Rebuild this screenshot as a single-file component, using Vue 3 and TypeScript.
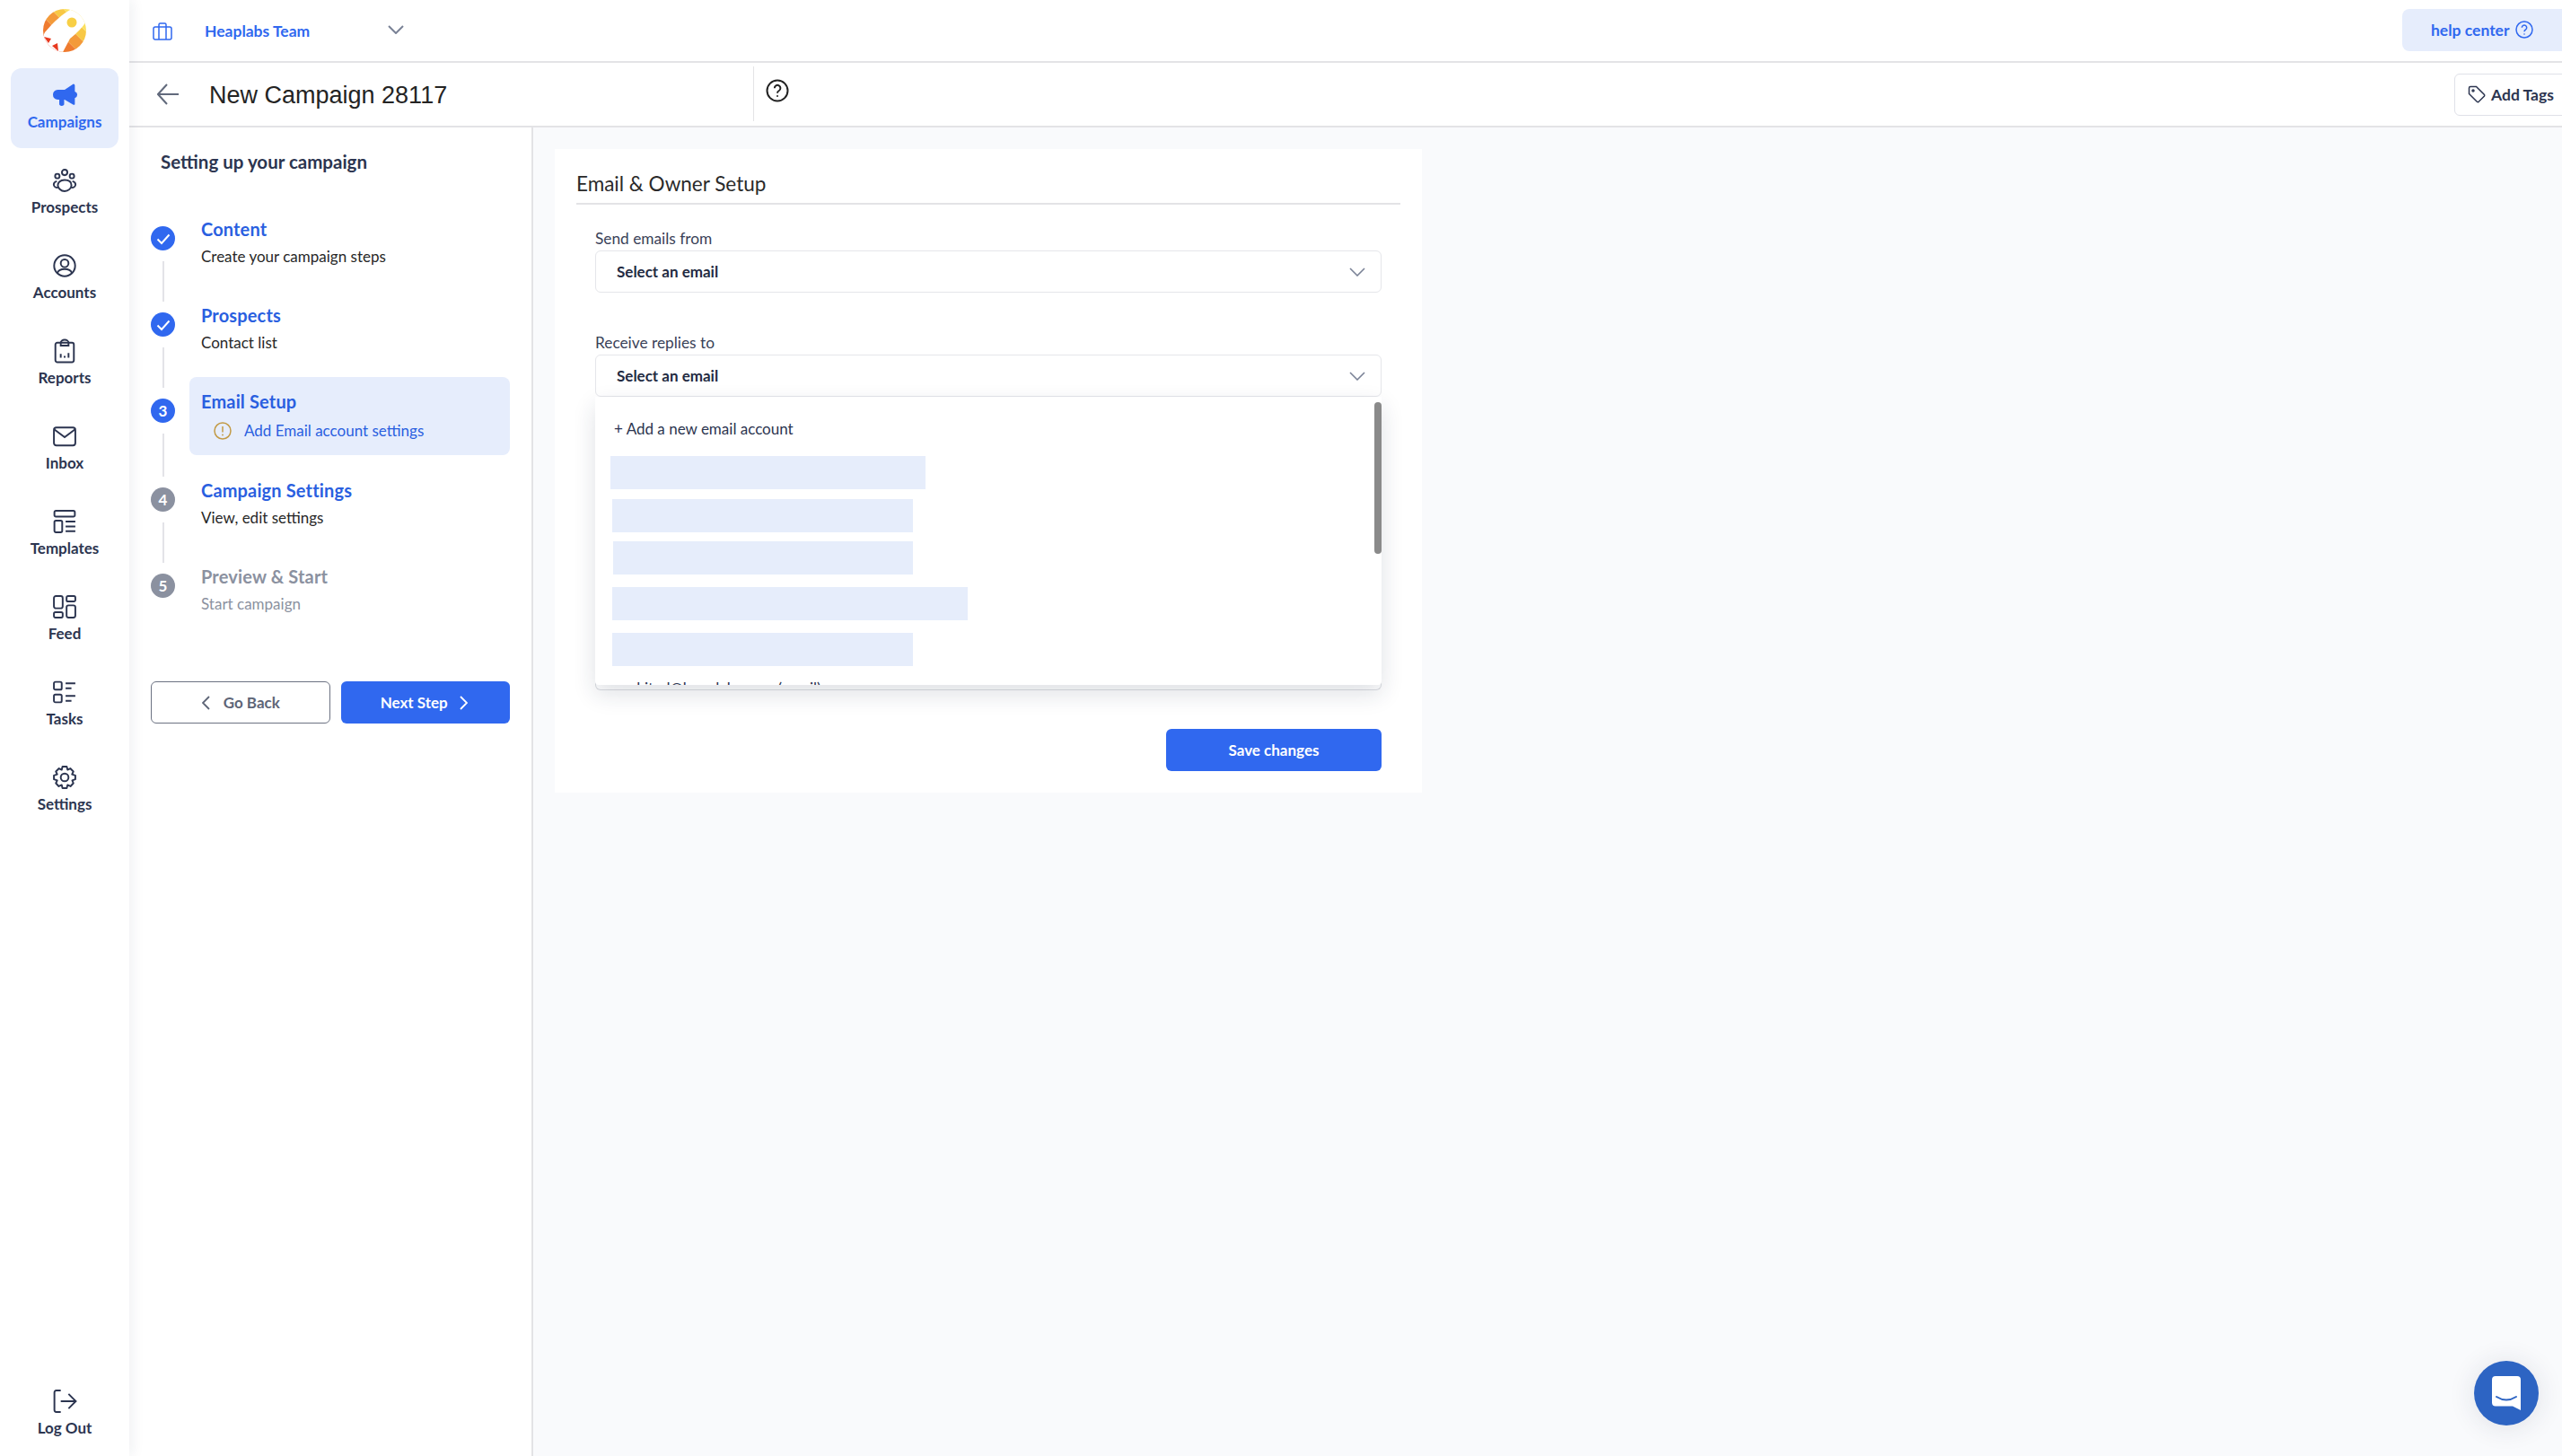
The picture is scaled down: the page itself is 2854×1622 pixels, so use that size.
<template>
  <div class="app">
    <aside class="sidebar">
      <svg class="logo" viewBox="0 0 48 48" width="48" height="48">
        <defs>
          <clipPath id="logoClip"><circle cx="24" cy="24" r="24" /></clipPath>
        </defs>
        <g clip-path="url(#logoClip)">
          <g transform="rotate(-45 24 24)">
            <rect x="-10" y="-10" width="14" height="70" fill="#e8391f" />
            <rect x="4" y="-10" width="14" height="70" fill="#ef7b2f" />
            <rect x="18" y="-10" width="12" height="70" fill="#f39a3a" />
            <rect x="30" y="-10" width="10" height="70" fill="#f8c845" />
            <rect x="40" y="-10" width="20" height="70" fill="#fbe05f" />
          </g>
          <path d="M32 0C22 5 12 14 2 26L0 30V48H22L30 33C38 27 44 20 48 14V0Z" fill="#fff" />
          <path d="M1 31L9 33L6 38ZM10 41L16 38L17 47Z" fill="#e8391f" />
        </g>
        <circle cx="32" cy="15" r="5.5" fill="#f8cf45" />
      </svg>

      <nav class="nav">
        <a
          v-for="item in navItems"
          :key="item.label"
          class="nav-item"
          :class="{ active: item.active }"
        >
          <svg class="nav-icon" viewBox="0 0 24 24" v-html="item.icon"></svg>
          <span>{{ item.label }}</span>
        </a>
      </nav>

      <a class="nav-item logout">
        <svg class="nav-icon" viewBox="0 0 24 24">
          <path d="M8 1H3.500Q1.500 1 1.500 3V21Q1.500 23 3.500 23H8" />
          <path d="M8 12H23M16 4.500L23.500 12L16 19.500" />
        </svg>
        <span>Log Out</span>
      </a>
    </aside>

    <div class="main">
      <header class="topbar">
        <svg class="team-icon" viewBox="0 0 22 20" width="22" height="20">
          <rect x="1" y="5" width="20" height="14" rx="2" />
          <path d="M7 19V2.500Q7 1 8.500 1H13.500Q15 1 15 2.500V19" />
        </svg>
        <span class="team-name">Heaplabs Team</span>
        <svg class="team-chevron" viewBox="0 0 18 10" width="18" height="10"><path d="M1 1L9 9L17 1" /></svg>
        <button class="help">
          help center
          <svg viewBox="0 0 20 20" width="20" height="20">
            <circle cx="10" cy="10" r="9" />
            <path d="M7.300 7.700A2.700 2.700 0 1 1 11.500 10Q10 10.800 10 12.200" />
            <circle class="dot" cx="10" cy="15" r="0.800" />
          </svg>
        </button>
      </header>

      <div class="subbar">
        <svg class="back" viewBox="0 0 24 24" width="24" height="24">
          <path d="M24 12H1.500M11 1L1 12L11 23" />
        </svg>
        <h1 class="title">New Campaign 28117</h1>
        <div class="divider">
          <svg viewBox="0 0 26 26" width="26" height="26">
            <circle cx="13" cy="13" r="11.500" />
            <path d="M9.800 10.200A3.300 3.300 0 1 1 14.800 13Q13 14 13 15.800" />
            <circle class="dot" cx="13" cy="19" r="1" />
          </svg>
        </div>
        <button class="tags">
          <svg viewBox="0 0 20 20" width="20" height="20">
            <path d="M1.500 3Q1.500 1.500 3 1.500H9.500L18.500 10.500Q19 11.200 18.500 12L12 18.500Q11.200 19 10.500 18.500L1.500 9.500Z" />
            <circle cx="6" cy="6" r="1" />
          </svg>
          Add Tags
        </button>
      </div>

      <div class="content">
        <section class="steps-panel">
          <h2 class="steps-title">Setting up your campaign</h2>
          <ol class="steps">
            <li
              v-for="(step, i) in steps"
              :key="step.title"
              class="step"
              :class="[step.state]"
            >
              <div class="marker">
                <span class="circle">
                  <svg v-if="step.state === 'done'" viewBox="0 0 16 16" width="16" height="16"><path d="M1.500 8.500L6 13L14.500 3.500" /></svg>
                  <template v-else>{{ i + 1 }}</template>
                </span>
                <span v-if="i < steps.length - 1" class="line"></span>
              </div>
              <div class="step-body">
                <div class="step-name">{{ step.title }}</div>
                <div class="step-sub">
                  <svg v-if="step.state === 'active'" class="warn" viewBox="0 0 20 20" width="20" height="20">
                    <circle cx="10" cy="10" r="9" />
                    <path d="M10 5V11.500" />
                    <circle class="dot" cx="10" cy="14.500" r="0.900" />
                  </svg>
                  {{ step.sub }}
                </div>
              </div>
            </li>
          </ol>
          <div class="step-actions">
            <button class="btn-back">
              <svg viewBox="0 0 9 16" width="9" height="16"><path d="M8 1L1 8L8 15" /></svg>
              Go Back
            </button>
            <button class="btn-next">
              Next Step
              <svg viewBox="0 0 9 16" width="9" height="16"><path d="M1 1L8 8L1 15" /></svg>
            </button>
          </div>
        </section>

        <section class="card">
          <h3 class="card-title">Email &amp; Owner Setup</h3>
          <div class="form">
            <label class="field-label">Send emails from</label>
            <div class="select">
              <span>Select an email</span>
              <svg viewBox="0 0 18 10" width="18" height="10"><path d="M1 1L9 9L17 1" /></svg>
            </div>

            <label class="field-label second">Receive replies to</label>
            <div class="select">
              <span>Select an email</span>
              <svg viewBox="0 0 18 10" width="18" height="10"><path d="M1 1L9 9L17 1" /></svg>
            </div>

            <div class="menu-wrap">
              <div class="menu">
                <div class="menu-add">+ Add a new email account</div>
                <div
                  v-for="(r, i) in redacted"
                  :key="i"
                  class="redacted"
                  :style="{ marginLeft: r.left + 'px', width: r.width + 'px', marginTop: r.top + 'px' }"
                ></div>
                <div class="menu-option">sankited@heaplabs.com (email)</div>
                <span class="scrollbar"></span>
              </div>
            </div>

            <div class="form-actions">
              <button class="btn-save">Save changes</button>
            </div>
          </div>
        </section>
      </div>
    </div>

    <button class="chat">
      <svg viewBox="0 0 32 38" width="32" height="38">
        <path d="M4 0H28Q32 0 32 4V38L23 33.500H4Q0 33.500 0 29.500V4Q0 0 4 0Z" fill="#fff" />
        <path d="M5 23Q16 30 27 23" fill="none" stroke="#2d64c3" stroke-width="2" stroke-linecap="round" />
      </svg>
    </button>
  </div>
</template>

<script setup lang="ts">
interface NavItem {
  label: string
  icon: string
  active?: boolean
}

interface Step {
  title: string
  sub: string
  state: 'done' | 'active' | 'next' | 'off'
}

const navItems: NavItem[] = [
  {
    label: 'Campaigns',
    active: true,
    icon: '<path class="solid" d="M5 6.500H12L21 .5Q22.500 .5 22.500 2V8.200Q25 9 25 11.500T22.500 15V21.500Q22.500 22 21 22L12 16.500H11.500V21Q11.500 23 9 23T6.500 21V16.500H5Q0 16 0 11.500T5 6.500Z"/>',
  },
  {
    label: 'Prospects',
    icon: '<circle cx="12" cy="3.800" r="2.800"/><circle cx="4.500" cy="7.500" r="2.300"/><circle cx="19.500" cy="7.500" r="2.300"/><path d="M12 11.500C7 11.500 5 14.500 5 17S8 23 12 23 19 20 19 17 17 11.500 12 11.500ZM4 12.800C1.500 13.500 .8 15 .8 16.200S2 19.500 5 19.500M20 12.800C22.500 13.500 23.200 15 23.200 16.200S22 19.500 19 19.500"/>',
  },
  {
    label: 'Accounts',
    icon: '<circle cx="12" cy="12" r="10.800"/><circle cx="12" cy="9.500" r="4"/><path d="M4.500 19.500Q6 15.500 12 15.500T19.500 19.500"/>',
  },
  {
    label: 'Reports',
    icon: '<rect x="2.500" y="3.500" width="19" height="20" rx="2"/><path d="M8 6.500V3.500A4 3 0 0 1 16 3.500V6.500ZM8 19V15M12 19V17M16 19V14"/>',
  },
  {
    label: 'Inbox',
    icon: '<rect x="1" y="3" width="22" height="18.500" rx="2.500"/><path d="M1.500 5L12 13L22.500 5"/>',
  },
  {
    label: 'Templates',
    icon: '<rect x="1.500" y="1" width="21" height="6" rx="1.500"/><rect x="1.500" y="11" width="8" height="12" rx="1.500"/><path d="M13 12H23M13 17H23M13 22H23"/>',
  },
  {
    label: 'Feed',
    icon: '<rect x="1" y="1" width="9" height="12.500" rx="2"/><rect x="1" y="17.500" width="9" height="5.500" rx="1.500"/><rect x="14" y="1" width="9" height="5.500" rx="1.500"/><rect x="14" y="10.500" width="9" height="12.500" rx="2"/>',
  },
  {
    label: 'Tasks',
    icon: '<rect x="1" y="1.500" width="8" height="8" rx="1.500"/><rect x="1" y="14.500" width="8" height="8" rx="1.500"/><path d="M13 3H23M13 8H19M13 16H23M13 21H19"/>',
  },
  {
    label: 'Settings',
    icon: '<circle cx="12" cy="12" r="4"/><path d="M9.800 1H14.200L15 4.200L17.800 2.800L21 6L19.600 8.900L23 10V14L19.800 15.100L21 18L18 21.200L15 19.800L14.200 23H9.800L9 19.800L6 21.200L3 18L4.400 15.100L1 14V10L4.400 8.900L3 6L6.200 2.800L9 4.200Z" stroke-linejoin="round"/>',
  },
]

const steps: Step[] = [
  { title: 'Content', sub: 'Create your campaign steps', state: 'done' },
  { title: 'Prospects', sub: 'Contact list', state: 'done' },
  { title: 'Email Setup', sub: 'Add Email account settings', state: 'active' },
  { title: 'Campaign Settings', sub: 'View, edit settings', state: 'next' },
  { title: 'Preview & Start', sub: 'Start campaign', state: 'off' },
]

// grey-blue blocks hiding addresses in the list
const redacted = [
  { left: 17, width: 351, top: 18 },
  { left: 19, width: 335, top: 11 },
  { left: 20, width: 334, top: 10 },
  { left: 19, width: 396, top: 14 },
  { left: 19, width: 335, top: 14 },
]
</script>

<style>
html, body { height: 100%; margin: 0; }
</style>

<style scoped>
.app {
  display: flex;
  height: 100vh;
  overflow: hidden;
  font-family: Lato, "Noto Sans", sans-serif;
  color: #2c3550;
  background: #fff;
}
button { font-family: inherit; cursor: pointer; }

.sidebar {
  width: 144px;
  flex-shrink: 0;
  display: flex;
  flex-direction: column;
  align-items: center;
  background: #fff;
  box-shadow: 3px 0 14px rgba(30, 40, 70, 0.07);
  z-index: 2;
  padding: 10px 0 2px;
  box-sizing: border-box;
}
.logo { display: block; margin-bottom: 18px; }
.nav { display: flex; flex-direction: column; gap: 6px; }
.nav-item {
  width: 120px;
  height: 89px;
  box-sizing: border-box;
  padding-bottom: 1.500px;
  border-radius: 12px;
  display: flex;
  flex-direction: column;
  align-items: center;
  justify-content: center;
  gap: 5.500px;
  font-size: 17px;
  font-weight: 700;
  line-height: 22px;
  color: #2c3550;
}
.nav-item.active { background: #e6edfc; color: #3068ef; }
.nav-icon {
  width: 26px;
  height: 26px;
  fill: none;
  stroke: currentColor;
  stroke-width: 1.800;
  overflow: visible;
}
.nav-icon :deep(.solid) { fill: currentColor; stroke: none; }
.logout { margin-top: auto; }

.main { flex: 1; min-width: 0; display: flex; flex-direction: column; }

.topbar {
  height: 70px;
  box-sizing: border-box;
  border-bottom: 2px solid #e3e3e6;
  display: flex;
  align-items: center;
  padding-left: 26px;
  flex-shrink: 0;
}
.team-icon { fill: none; stroke: #3068ef; stroke-width: 1.5; margin-top: 2px; }
.team-name { margin-left: 36px; font-size: 17.500px; font-weight: 700; color: #3068ef; width: 204px; }
.team-chevron { fill: none; stroke: #7a8296; stroke-width: 2; margin-top: -2px; }
.help {
  margin-left: auto;
  width: 178px;
  height: 47px;
  margin-top: -2px;
  box-sizing: border-box;
  border: none;
  background: #e6edfc;
  border-radius: 8px 0 0 8px;
  display: flex;
  align-items: center;
  gap: 7px;
  padding: 0 0 0 32px;
  font-size: 17.500px;
  font-weight: 700;
  color: #3068ef;
}
.help svg { fill: none; stroke: #3068ef; stroke-width: 1.500; flex-shrink: 0; }
.help .dot { fill: #3068ef; stroke: none; }

.subbar {
  height: 72px;
  box-sizing: border-box;
  border-bottom: 2px solid #e3e3e6;
  display: flex;
  align-items: center;
  padding-left: 31px;
  flex-shrink: 0;
}
.back { fill: none; stroke: #626a7c; stroke-width: 2; flex-shrink: 0; }
.title {
  margin: 2px 0 0 34px;
  width: 606px;
  font-family: "Liberation Sans", Arial, sans-serif;
  font-size: 27px;
  font-weight: 400;
  line-height: 36px;
  color: #242424;
  flex-shrink: 0;
}
.divider {
  height: 61px;
  border-left: 1px solid #e3e3e6;
  padding-left: 13px;
  display: flex;
  align-items: center;
  margin-top: -1px;
}
.divider svg { fill: none; stroke: #222; stroke-width: 2; margin-top: -8px; }
.divider .dot { fill: #222; stroke: none; }
.tags {
  margin-left: auto;
  width: 140px;
  height: 47px;
  margin-right: -20px;
  box-sizing: border-box;
  border: 1px solid #dfe1e8;
  border-radius: 6px;
  background: #fff;
  display: flex;
  align-items: center;
  gap: 6px;
  padding: 0 0 0 14px;
  font-size: 17.500px;
  font-weight: 700;
  color: #2c3550;
}
.tags svg { fill: none; stroke: #2c3550; stroke-width: 1.500; flex-shrink: 0; }

.content { flex: 1; display: flex; min-height: 0; }

.steps-panel {
  width: 450px;
  box-sizing: border-box;
  border-right: 2px solid #e3e3e6;
  padding: 0 24px;
  flex-shrink: 0;
}
.steps-title {
  margin: 25px 0 0 11px;
  font-size: 20.500px;
  line-height: 26px;
  font-weight: 700;
  color: #2c3550;
}
.steps { list-style: none; margin: 59px 0 0; padding: 0; }
.step { display: flex; gap: 29px; }
.marker { width: 27px; display: flex; flex-direction: column; align-items: center; flex-shrink: 0; }
.circle {
  width: 27px;
  height: 27px;
  border-radius: 50%;
  display: flex;
  align-items: center;
  justify-content: center;
  color: #fff;
  font-size: 17px;
  font-weight: 700;
  background: #3068ef;
}
.circle svg { fill: none; stroke: #fff; stroke-width: 2; }
.next .circle, .off .circle { background: #8b91a0; }
.line { width: 2px; height: 45px; margin: 12px 0; background: #e3e3e8; }
.active .line { height: 48px; }
.step-body { margin-top: -9px; flex: 1; min-width: 0; }
.step-name { font-size: 20px; letter-spacing: 0.150px; line-height: 24px; font-weight: 700; color: #2a5fe0; }
.step-sub { font-size: 17px; line-height: 24px; margin-top: 7px; color: #282828; }
.off .step-name, .off .step-sub { color: #8b91a0; }
.active .step-body {
  margin: -24px 0 0 -13px;
  height: 87px;
  box-sizing: border-box;
  padding: 15px 13px 0;
  background: #e6edfc;
  border-radius: 8px;
}
.active .step-sub {
  display: flex;
  align-items: center;
  margin-top: 9px;
  padding-left: 14px;
  color: #2a5fe0;
}
.warn { fill: none; stroke: #c29a45; stroke-width: 1.500; margin-right: 14px; flex-shrink: 0; }
.warn .dot { fill: #c29a45; stroke: none; }

.step-actions { display: flex; gap: 12px; margin-top: 74px; }
.btn-back, .btn-next {
  height: 47px;
  border-radius: 6px;
  display: flex;
  align-items: center;
  justify-content: center;
  font-size: 17px;
  font-weight: 700;
  box-sizing: border-box;
}
.btn-back { width: 201px; border: 1px solid #6c7282; background: #fff; color: #5e6577; gap: 15px; padding-left: 6px; }
.btn-back svg { fill: none; stroke: #5e6577; stroke-width: 1.800; }
.btn-next { width: 188px; border: none; background: #3068ef; color: #fff; gap: 13px; padding-right: 10px; }
.btn-next svg { fill: none; stroke: #fff; stroke-width: 1.800; }

.card {
  width: 966px;
  height: 717px;
  box-sizing: border-box;
  margin: 24px 0 0 24px;
  padding: 24px 24px 0;
  background: #fff;
  box-shadow: 0 0 0 9999px #f9fafc;
  clip-path: inset(-24px -9999px -9999px -24px);
}
.card-title {
  margin: 0;
  height: 38px;
  box-sizing: border-box;
  font-size: 22.500px;
  line-height: 30px;
  font-weight: 400;
  color: #2a2a2a;
  border-bottom: 2px solid #e3e3e6;
}
.form { padding: 27px 0 0 21px; width: 876px; box-sizing: content-box; }
.field-label { display: block; font-size: 17.300px; line-height: 22px; margin-bottom: 2px; color: #3a4258; }
.field-label.second { margin-top: 45px; }
.select {
  height: 47px;
  box-sizing: border-box;
  border: 1px solid #e5e6ea;
  border-radius: 6px;
  display: flex;
  align-items: center;
  justify-content: space-between;
  padding: 0 17px 0 23px;
  font-size: 17px;
  font-weight: 700;
  color: #232b42;
}
.select svg { fill: none; stroke: #7a8296; stroke-width: 1.600; }
.menu-wrap {
  position: relative;
  height: 327px;
  box-sizing: border-box;
  border: 1px solid #dcdde1;
  border-top: none;
  border-radius: 0 0 6px 6px;
}
.menu {
  position: absolute;
  top: 0;
  left: -1px;
  right: -1px;
  height: 321px;
  background: #fff;
  overflow: hidden;
  border-radius: 0 0 4px 4px;
  box-shadow: 0 10px 26px rgba(30, 40, 70, 0.14);
  padding-top: 24px;
  box-sizing: border-box;
}
.menu-add { margin-left: 21px; font-size: 17px; line-height: 24px; color: #2c3550; }
.redacted { height: 37px; background: #e6edfb; }
.menu-option { margin: 13px 0 0 21px; font-size: 17px; line-height: 24px; color: #2c3550; white-space: nowrap; }
.scrollbar {
  position: absolute;
  top: 6px;
  right: 0;
  width: 8px;
  height: 169px;
  border-radius: 4px;
  background: #8a8a8a;
}
.form-actions { display: flex; justify-content: flex-end; margin-top: 43px; }
.btn-save {
  width: 240px;
  height: 47px;
  border: none;
  border-radius: 6px;
  background: #3068ef;
  color: #fff;
  font-size: 17px;
  font-weight: 700;
}

.chat {
  position: fixed;
  left: 2756px;
  top: 1516px;
  width: 72px;
  height: 72px;
  border: none;
  padding: 0;
  border-radius: 50%;
  background: #2d64c3;
  box-shadow: 0 2px 30px rgba(30, 40, 70, 0.12);
  display: flex;
  align-items: center;
  justify-content: center;
}
</style>
